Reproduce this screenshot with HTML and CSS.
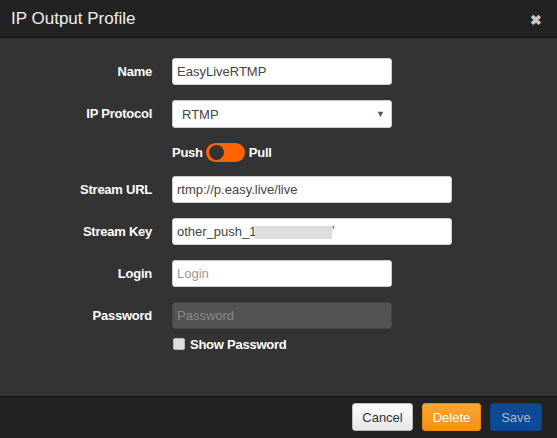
FILE: index.html
```html
<!DOCTYPE html>
<html>
<head>
<meta charset="utf-8">
<link rel="stylesheet" href="styles.css">
</head>
<body>
<div class="modal">
  <div class="modal-header">
    <h1 class="title">IP Output Profile</h1>
    <span class="close">&#10006;</span>
  </div>
  <div class="modal-body">
    <div class="form">
      <label class="lbl">Name</label>
      <div class="field"><input class="input short" type="text" value="EasyLiveRTMP"></div>

      <label class="lbl">IP Protocol</label>
      <div class="field">
        <div class="select short"><span>RTMP</span><span class="arrow">&#9660;</span></div>
      </div>

      <div class="lbl empty"></div>
      <div class="field toggle-row">
        <span class="tog-text">Push</span>
        <span class="toggle"><span class="knob"></span></span>
        <span class="tog-text">Pull</span>
      </div>

      <label class="lbl">Stream URL</label>
      <div class="field"><input class="input long" type="text" value="rtmp://p.easy.live/live"></div>

      <label class="lbl">Stream Key</label>
      <div class="field key-field">
        <input class="input long" type="text" value="other_push_1">
        <span class="redact"></span>
        <span class="redact-tail">'</span>
      </div>

      <label class="lbl">Login</label>
      <div class="field"><input class="input short" type="text" placeholder="Login"></div>

      <label class="lbl pw-lbl">Password</label>
      <div class="field pw-field">
        <input class="input short dark" type="text" placeholder="Password">
        <label class="show"><span class="check"></span>Show Password</label>
      </div>
    </div>
  </div>
  <div class="modal-footer">
    <button class="btn cancel">Cancel</button>
    <button class="btn delete">Delete</button>
    <button class="btn save">Save</button>
  </div>
</div>
</body>
</html>
```

FILE: styles.css
```css
* { box-sizing: border-box; }
html, body { margin: 0; padding: 0; }
body {
  width: 557px;
  height: 438px;
  background: #333;
  font-family: "Liberation Sans", Arial, sans-serif;
  font-size: 13px;
  overflow: hidden;
}
.modal {
  display: flex;
  flex-direction: column;
  height: 438px;
}
.modal-header {
  height: 38px;
  background: #222;
  border-bottom: 1px solid #111;
  display: flex;
  align-items: center;
  justify-content: space-between;
  padding: 0 15px 0 11px;
}
.title {
  margin: 0;
  font-size: 17px;
  font-weight: normal;
  color: #f0f0f0;
  padding-top: 1px;
}
.close {
  color: #c8c8c8;
  font-size: 14px;
  font-weight: bold;
  padding-top: 3px;
}
.modal-body {
  flex: 1;
  background: #333;
  padding-top: 20px;
}
.form {
  display: grid;
  grid-template-columns: 152px 1fr;
  column-gap: 20px;
  row-gap: 15px;
  align-items: start;
}
.lbl {
  text-align: right;
  font-weight: bold;
  color: #fff;
  height: 27px;
  line-height: 27px;
  letter-spacing: -0.25px;
}
.lbl.empty { height: 18px; }
.field { position: relative; }
.input {
  display: block;
  height: 27px;
  border: 1px solid #ccc;
  border-radius: 3px;
  background: #fff;
  font-family: "Liberation Sans", Arial, sans-serif;
  font-size: 13px;
  color: #444;
  padding: 0 4px;
  margin: 0;
  outline: none;
}
.input::placeholder { color: #999; }
.short { width: 220px; }
.long { width: 280px; }
.select {
  height: 28px;
  background: #fff;
  border: 1px solid #ccc;
  border-radius: 3px;
  color: #444;
  display: flex;
  align-items: center;
  justify-content: space-between;
  padding: 0 6px 0 9px;
}
.arrow { font-size: 9px; color: #555; }
.toggle-row {
  display: flex;
  align-items: center;
  height: 18px;
}
.tog-text { font-weight: bold; color: #fff; letter-spacing: -0.25px; }
.toggle {
  width: 39px;
  height: 19px;
  background: #ff6400;
  border-radius: 10px;
  margin: 0 4px 0 3px;
  display: flex;
  align-items: center;
  padding-left: 3px;
}
.knob {
  width: 15px;
  height: 15px;
  border-radius: 50%;
  background: #333;
}
.redact {
  position: absolute;
  left: 83px;
  top: 8px;
  width: 77px;
  height: 13px;
  background: #ddd;
}
.redact-tail {
  position: absolute;
  left: 160px;
  top: 6px;
  color: #444;
  font-size: 13px;
  line-height: 13px;
}
.dark {
  background: #535353;
  border-color: #444;
  color: #aaa;
}
.dark::placeholder { color: #8a8a8a; }
.show {
  display: flex;
  align-items: center;
  margin-top: 8px;
  font-weight: bold;
  color: #fff;
  height: 14px;
  letter-spacing: -0.25px;
}
.check {
  width: 12px;
  height: 12px;
  background: #ddd;
  border: 1px solid #bbb;
  border-radius: 2px;
  margin: 0 5px 0 1px;
}
.modal-footer {
  height: 42px;
  background: #222;
  border-top: 1px solid #111;
  display: flex;
  justify-content: flex-end;
  align-items: center;
  gap: 9px;
  padding: 0 15px 1px 0;
}
.btn {
  height: 28px;
  border-radius: 3px;
  font-family: "Liberation Sans", Arial, sans-serif;
  font-size: 13px;
  padding: 0;
  margin: 0;
}
.cancel {
  width: 61px;
  background: linear-gradient(#fff, #e6e6e6);
  border: 1px solid #bbb;
  color: #333;
}
.delete {
  width: 59px;
  background: linear-gradient(#f9a535, #f7920f);
  border: 1px solid #e68a10;
  color: #fff;
}
.save {
  width: 52px;
  background: #0d4a96;
  border: 1px solid #0a3f80;
  color: #a9b8cc;
}
```
